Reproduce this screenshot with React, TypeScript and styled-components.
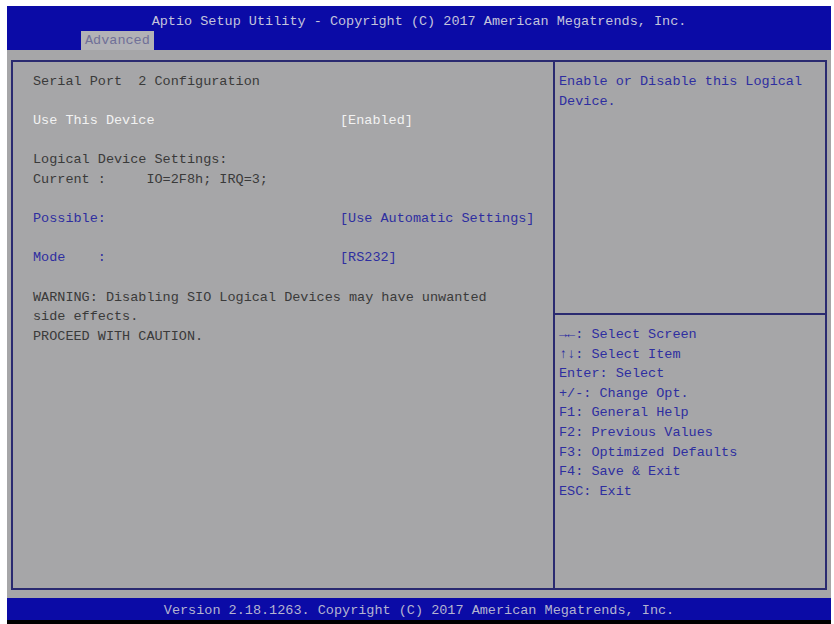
import React from 'react'
import styled, { createGlobalStyle } from 'styled-components'

const GlobalStyle = createGlobalStyle`
  html, body {
    margin: 0;
    padding: 0;
    background: #ffffff;
  }
`

const BLUE = '#0b0ba6'
const GRAY = '#a6a6a8'
const NAVY = '#2a2a70'

const Screen = styled.div`
  width: 834px;
  height: 624px;
  box-sizing: border-box;
  padding: 6px 3px 0 7px;
  display: flex;
  flex-direction: column;
  background: #ffffff;
  font-family: "Liberation Mono", "DejaVu Sans Mono", monospace;
  font-size: 13.5px;
  line-height: 19.6px;
`

const Header = styled.header`
  height: 44px;
  background: ${BLUE};
  display: flex;
  flex-direction: column;
`

const Title = styled.div`
  height: 25px;
  line-height: 32px;
  text-align: center;
  color: #c4c4dc;
  white-space: pre;
`

const TabRow = styled.div`
  flex: 1;
  display: flex;
  align-items: flex-end;
  padding-left: 74px;
`

const Tab = styled.div`
  height: 19px;
  line-height: 20px;
  padding: 0 4px;
  background: #b2b2b6;
  color: #707098;
`

const Body = styled.main`
  flex: 1;
  background: ${GRAY};
  padding: 10px 4px 8px 4px;
  display: flex;
`

const Panel = styled.div`
  flex: 1;
  display: grid;
  grid-template-columns: 542px 1fr;
  border: 2px solid ${NAVY};
`

const LeftColumn = styled.section`
  border-right: 2px solid ${NAVY};
  padding: 10px 0 0 20px;
  color: #3a3a3a;
`

const Line = styled.div<{ $tone?: 'text' | 'active' | 'link' }>`
  height: 19.6px;
  white-space: pre;
  color: ${(p) =>
    p.$tone === 'active' ? '#f2f2f2' : p.$tone === 'link' ? '#2e2ea0' : '#3a3a3a'};
`

const Gap = styled.div`
  height: 19.6px;
`

const Row = styled.div<{ $tone: 'active' | 'link' }>`
  display: grid;
  grid-template-columns: 307px 1fr;
  height: 19.6px;
  white-space: pre;
  color: ${(p) => (p.$tone === 'active' ? '#f2f2f2' : '#2e2ea0')};
`

const RightColumn = styled.aside`
  display: flex;
  flex-direction: column;
  color: #2e2e96;
`

const HelpTop = styled.div`
  height: 253px;
  padding: 10px 0 0 4px;
  box-sizing: border-box;
  border-bottom: 2px solid ${NAVY};
`

const HelpKeys = styled.div`
  padding: 10px 0 0 4px;
`

const Footer = styled.footer`
  height: 22px;
  background: ${BLUE};
  color: #b4b4d0;
  text-align: center;
  line-height: 26px;
  white-space: pre;
  border-bottom: 4px solid #000000;
`

const keys = [
  '\u2192\u2190: Select Screen',
  '\u2191\u2193: Select Item',
  'Enter: Select',
  '+/-: Change Opt.',
  'F1: General Help',
  'F2: Previous Values',
  'F3: Optimized Defaults',
  'F4: Save & Exit',
  'ESC: Exit',
]

export default function App() {
  return (
    <>
      <GlobalStyle />
      <Screen>
        <Header>
          <Title>Aptio Setup Utility - Copyright (C) 2017 American Megatrends, Inc.</Title>
          <TabRow>
            <Tab>Advanced</Tab>
          </TabRow>
        </Header>
        <Body>
          <Panel>
            <LeftColumn>
              <Line>Serial Port  2 Configuration</Line>
              <Gap />
              <Row $tone="active">
                <span>Use This Device</span>
                <span>[Enabled]</span>
              </Row>
              <Gap />
              <Line>Logical Device Settings:</Line>
              <Line>Current :     IO=2F8h; IRQ=3;</Line>
              <Gap />
              <Row $tone="link">
                <span>Possible:</span>
                <span>[Use Automatic Settings]</span>
              </Row>
              <Gap />
              <Row $tone="link">
                <span>Mode    :</span>
                <span>[RS232]</span>
              </Row>
              <Gap />
              <Line>WARNING: Disabling SIO Logical Devices may have unwanted</Line>
              <Line>side effects.</Line>
              <Line>PROCEED WITH CAUTION.</Line>
            </LeftColumn>
            <RightColumn>
              <HelpTop>
                <Line $tone="link">Enable or Disable this Logical</Line>
                <Line $tone="link">Device.</Line>
              </HelpTop>
              <HelpKeys>
                {keys.map((k) => (
                  <Line key={k} $tone="link">{k}</Line>
                ))}
              </HelpKeys>
            </RightColumn>
          </Panel>
        </Body>
        <Footer>Version 2.18.1263. Copyright (C) 2017 American Megatrends, Inc.</Footer>
      </Screen>
    </>
  )
}
